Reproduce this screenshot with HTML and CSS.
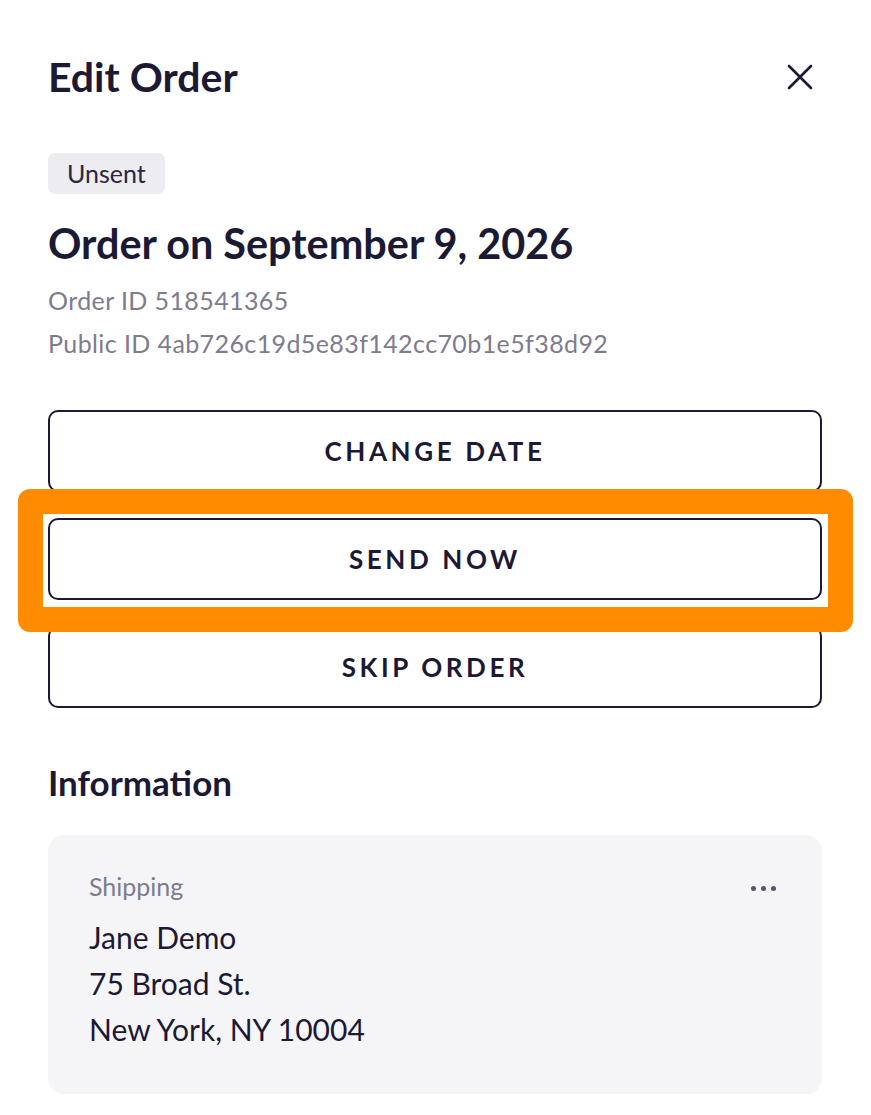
FILE: index.html
```html
<!DOCTYPE html>
<html>
<head>
<meta charset="utf-8">
<link rel="stylesheet" href="styles.css">
</head>
<body>
<div class="panel">
  <header class="head">
    <h1 class="title">Edit Order</h1>
    <button class="close" aria-label="Close">
      <svg width="26" height="26" viewBox="0 0 26 26"><path d="M2 2 L24 24 M24 2 L2 24" stroke="#1c1934" stroke-width="2.6" stroke-linecap="round"/></svg>
    </button>
  </header>
  <span class="badge">Unsent</span>
  <h2 class="order-title">Order on September 9, 2026</h2>
  <p class="meta">Order ID 518541365</p>
  <p class="meta">Public ID 4ab726c19d5e83f142cc70b1e5f38d92</p>
  <div class="actions">
    <button class="btn">CHANGE DATE</button>
    <div class="highlight-wrap">
      <button class="btn">SEND NOW</button>
      <div class="highlight"></div>
    </div>
    <button class="btn">SKIP ORDER</button>
  </div>
  <h3 class="section">Information</h3>
  <div class="card">
    <div class="card-head">
      <span class="card-label">Shipping</span>
      <span class="dots"><i></i><i></i><i></i></span>
    </div>
    <p class="addr">Jane Demo</p>
    <p class="addr">75 Broad St.</p>
    <p class="addr">New York, NY 10004</p>
  </div>
</div>
</body>
</html>
```
FILE: styles.css
```css
* { box-sizing: border-box; }
html, body { margin: 0; padding: 0; background: #ffffff; }
body {
  font-family: Lato, "Open Sans", sans-serif;
  color: #1c1934;
  width: 871px;
  height: 1115px;
  overflow: hidden;
}
.panel {
  padding: 48px 49px 0 48px;
}
.head {
  display: flex;
  justify-content: space-between;
  align-items: center;
  height: 58px;
}
.title {
  margin: 0;
  font-size: 41px;
  font-weight: 700;
  line-height: 58px;
}
.close {
  background: none;
  border: 0;
  padding: 0;
  width: 26px;
  height: 26px;
  margin-right: 9px;
  display: flex;
}
.badge {
  display: inline-block;
  margin-top: 47px;
  background: #ececf1;
  border-radius: 7px;
  padding: 0 19px;
  height: 41px;
  line-height: 41px;
  font-size: 25px;
  color: #2a2740;
}
.order-title {
  margin: 24px 0 0;
  font-size: 41.4px;
  font-weight: 700;
  line-height: 50px;
}
.meta {
  margin: 0;
  font-size: 25px;
  letter-spacing: 0.4px;
  line-height: 43px;
  color: #7d7b8e;
}
.meta:first-of-type { margin-top: 11px; }
.actions {
  margin-top: 45px;
  display: flex;
  flex-direction: column;
  gap: 26px;
}
.btn {
  display: block;
  width: 100%;
  height: 82px;
  background: #fff;
  border: 2px solid #1c1934;
  border-radius: 10px;
  font-family: Lato, "Open Sans", sans-serif;
  font-size: 26px;
  font-weight: 700;
  letter-spacing: 3.6px;
  color: #1c1934;
}
.highlight-wrap { position: relative; }
.highlight {
  position: absolute;
  left: -30px;
  right: -31px;
  top: -29px;
  bottom: -32px;
  border: 25px solid #ff8c00;
  border-radius: 12px;
  pointer-events: none;
}
.highlight::before {
  content: "";
  position: absolute;
  inset: 0;
  border: 4px solid #fff;
  border-radius: 2px;
  pointer-events: none;
}
.section {
  margin: 52px 0 0;
  font-size: 35px;
  font-weight: 700;
  line-height: 44px;
}
.card {
  margin-top: 31px;
  background: #f5f5f8;
  border-radius: 16px;
  padding: 34px 40px 38px 41px;
  height: 259px;
}
.card-head {
  display: flex;
  justify-content: space-between;
  align-items: center;
  height: 34px;
  margin-bottom: 11px;
}
.card-label {
  font-size: 25px;
  color: #7d7b8e;
}
.dots {
  display: flex;
  gap: 5px;
  margin-right: 6px;
  margin-top: 4px;
}
.dots i {
  width: 5px;
  height: 5px;
  border-radius: 50%;
  background: #55536a;
}
.addr {
  margin: 0;
  font-size: 30px;
  line-height: 46px;
  color: #1c1934;
}
```
